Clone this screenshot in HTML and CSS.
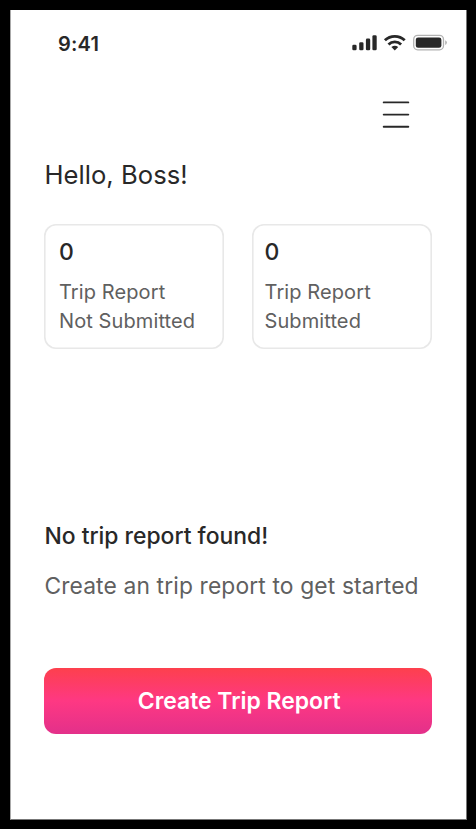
FILE: index.html
```
<!DOCTYPE html>
<html lang="en">
<head>
<meta charset="utf-8">
<title>Trip Reports</title>
<link rel="stylesheet" href="styles.css">
</head>
<body>
<main class="screen">
  <header class="status">
    <span class="time">9:41</span>
    <svg class="indicators" width="98" height="20" viewBox="0 0 98 20" fill="#282828">
      <rect x="2.3" y="11.8" width="4.3" height="5.4" rx="1.3"/>
      <rect x="9.2" y="9.2" width="4.3" height="8" rx="1.3"/>
      <rect x="15.9" y="5.6" width="4.3" height="11.6" rx="1.3"/>
      <rect x="22.4" y="2.2" width="4.3" height="15" rx="1.3"/>
      <g fill="none" stroke="#282828" stroke-width="2.8">
        <path d="M34.9 7.3A14.2 14.2 0 0 1 54.7 7.3"/>
        <path d="M38.5 11.4A9 9 0 0 1 51.1 11.4"/>
      </g>
      <path d="M41.4 14Q44.8 11.4 48.2 14L44.8 17.4Z"/>
      <rect x="63.7" y="2.4" width="29.8" height="14.4" rx="4" fill="none" stroke="#b2b2b2" stroke-width="1.3"/>
      <rect x="65.8" y="4.4" width="25.6" height="10.4" rx="2.3"/>
      <path d="M95.2 7.2Q96.9 8 96.9 9.6T95.2 12Z" fill="#b2b2b2"/>
    </svg>
  </header>
  <nav class="nav">
    <svg class="menu" width="28" height="30" viewBox="0 0 28 30" fill="none" stroke="#282828" stroke-width="1.9" stroke-linecap="round">
      <path d="M1.7 2.4H26.3M1.7 14.6H26.3M1.7 26.7H26.3"/>
    </svg>
  </nav>
  <h1 class="greeting">Hello, Boss!</h1>
  <section class="cards">
    <article class="card">
      <strong class="count">0</strong>
      <p class="label">Trip Report<br>Not Submitted</p>
    </article>
    <article class="card card-submitted">
      <strong class="count">0</strong>
      <p class="label">Trip Report<br>Submitted</p>
    </article>
  </section>
  <section class="empty">
    <h2 class="empty-title">No trip report found!</h2>
    <p class="empty-text">Create an trip report to get started</p>
  </section>
  <button class="create" type="button">Create Trip Report</button>
</main>
</body>
</html>
```
FILE: styles.css
```
* { box-sizing: border-box; margin: 0; }
body {
  height: 829px;
  padding: 10px 9px 9px 10px;
  background: #000;
  font-family: Inter, sans-serif;
  color: #282828;
  overflow: hidden;
}
.screen {
  height: 810px;
  padding: 0 34px 0 33.4px;
  border: 1px solid #777;
  border-left-color: #aaa;
  border-top: 0;
  background: #fff;
  display: flex;
  flex-direction: column;
}
.status {
  height: 68px;
  padding: 22px 0 0 13.6px;
  margin-right: -16px;
  display: flex;
  justify-content: space-between;
  align-items: flex-start;
}
.time { font-size: 20px; line-height: 24px; font-weight: 600; letter-spacing: .2px; }
.indicators { margin: 1px 0.4px 0 0; }
.nav {
  height: 72px;
  padding: 22px 22.5px 0 0;
  display: flex;
  justify-content: flex-end;
}
.greeting { font-size: 25.6px; line-height: 50px; font-weight: 400; letter-spacing: .05px; }
.cards {
  display: grid;
  grid-template-columns: 180px 180px;
  justify-content: space-between;
  margin-top: 23.5px;
}
.card {
  height: 125.5px;
  padding: 14.5px 14.6px;
  border-radius: 12px;
  box-shadow: inset 0 0 0 1.6px #e8e8e8;
}
.card-submitted { padding-left: 12.5px; }
.count { display: block; font-size: 23px; line-height: 28px; font-weight: 500; }
.label { margin-top: 12px; font-size: 20px; line-height: 28.5px; letter-spacing: .1px; color: #606060; white-space: nowrap; }
.empty { margin-top: 172px; white-space: nowrap; }
.empty-title { font-size: 22.9px; line-height: 30px; font-weight: 500; }
.empty-text { margin-top: 20px; font-size: 22.8px; line-height: 30px; letter-spacing: .14px; color: #606060; }
.create {
  margin-top: 67.4px;
  height: 65.5px;
  padding: 0 0 1px 2px;
  border: 0;
  border-radius: 12px;
  background: linear-gradient(#fd404d, #fe3883 50%, #e3308a);
  color: #fff;
  font: 600 22.9px/30px Inter, sans-serif;
}
```
